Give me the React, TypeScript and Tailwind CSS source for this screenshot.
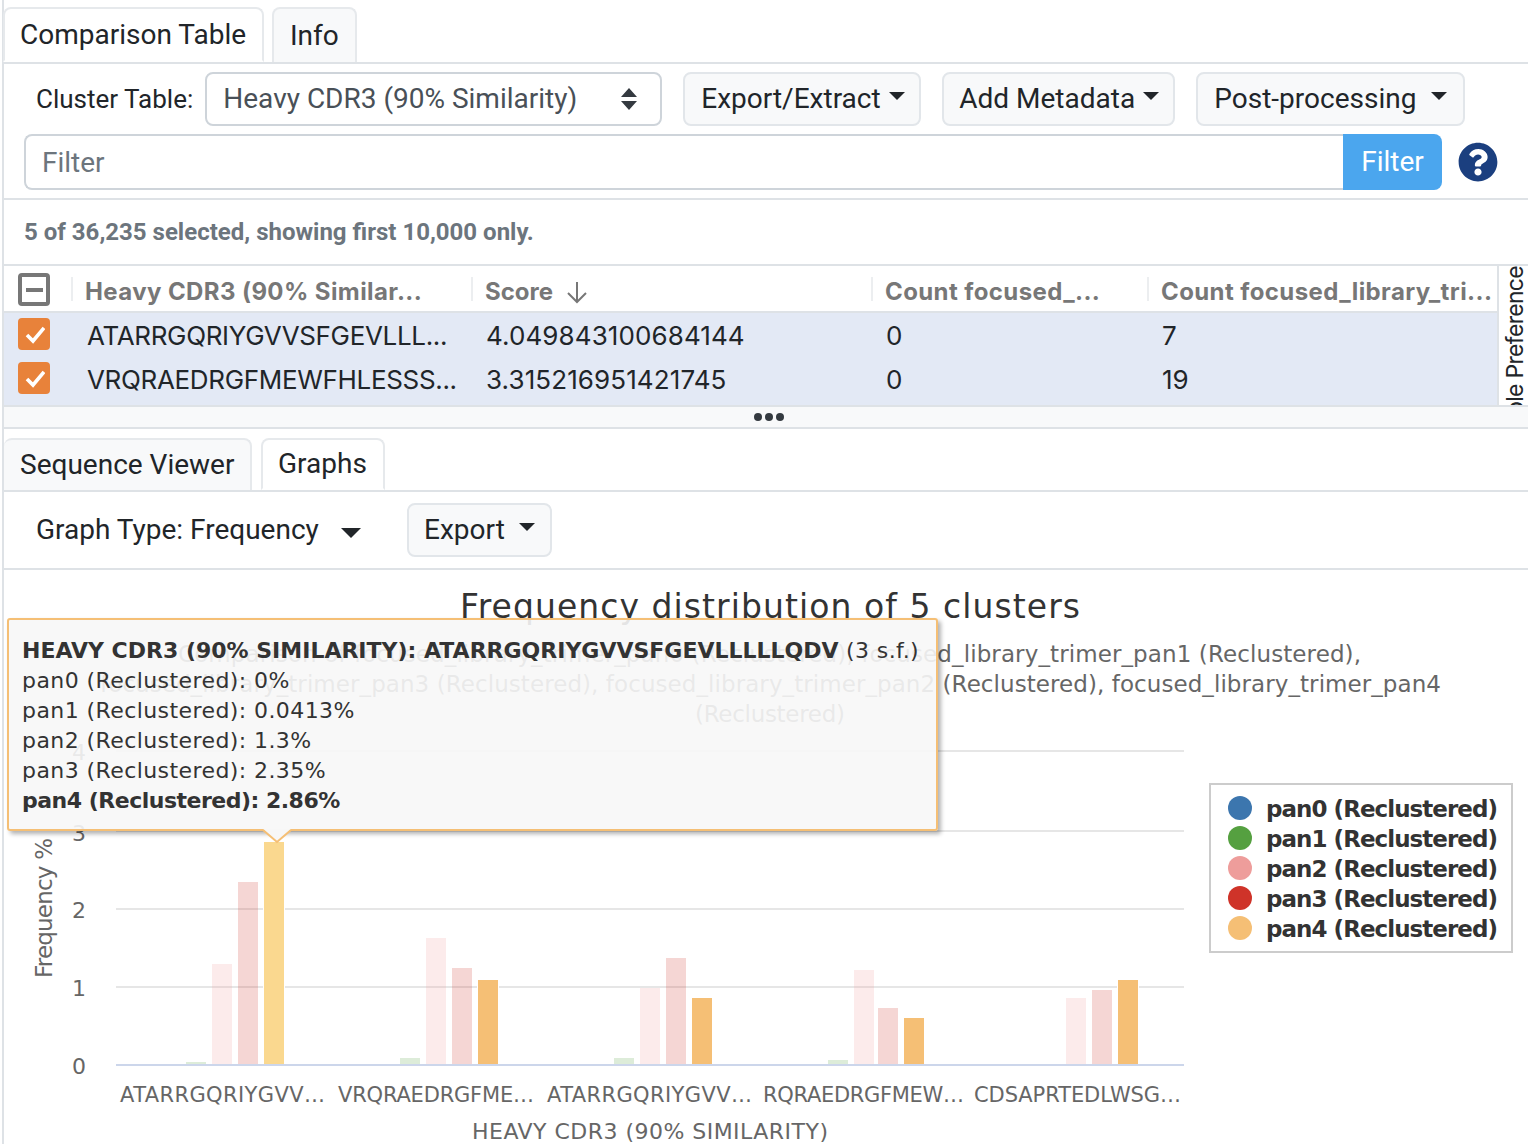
import React from "react";
import { FaQuestionCircle } from "react-icons/fa";

const CHART_FONT = "'DejaVu Sans', 'Liberation Sans', sans-serif";
const TABLE_FONT = "Inter, 'Liberation Sans', sans-serif";

const Caret = () => (
  <span className="inline-block w-0 h-0 border-x-[8px] border-x-transparent border-t-[8px] border-t-[#212529]" />
);

const tabBase = "h-full flex items-center border-2 rounded-t-lg text-[28px] leading-none";

function Btn({ w, pl, children }: { w: string; pl: string; children: React.ReactNode }) {
  return <div className={`${w} ${pl} h-[54px] flex items-center bg-[#f8f9fa] border-2 border-[#e2e6ea] rounded-lg text-[28px] text-[#212529]`}>{children}</div>;
}

type B = [number, number, string, number];
const bars: B[] = [
  [186, 1062, "#55a040", 0.2], [212, 964, "#ee9d9b", 0.2], [238, 882, "#cf3329", 0.2],
  [400, 1058, "#55a040", 0.2], [426, 938, "#ee9d9b", 0.2], [452, 968, "#cf3329", 0.2],
  [614, 1058, "#55a040", 0.2], [640, 988, "#ee9d9b", 0.2], [666, 958, "#cf3329", 0.2],
  [828, 1060, "#55a040", 0.2], [854, 970, "#ee9d9b", 0.2], [878, 1008, "#cf3329", 0.2],
  [1066, 998, "#ee9d9b", 0.2], [1092, 990, "#cf3329", 0.2],
];
const solid: [number, number, string][] = [
  [264, 842, "#fad88f"], [478, 980, "#f5bf75"], [692, 998, "#f5bf75"], [904, 1018, "#f5bf75"], [1118, 980, "#f5bf75"],
];
const legend: [string, string, number][] = [
  ["pan0 (Reclustered)", "#3c76ae", 808],
  ["pan1 (Reclustered)", "#55a040", 838],
  ["pan2 (Reclustered)", "#ee9d9b", 868],
  ["pan3 (Reclustered)", "#cf3329", 898],
  ["pan4 (Reclustered)", "#f5bf75", 928],
];
const xLabels: [string, number, number][] = [
  ["ATARRGQRIYGVV…", 120, 205],
  ["VRQRAEDRGFME…", 338, 196],
  ["ATARRGQRIYGVV…", 547, 205],
  ["RQRAEDRGFMEW…", 763, 201],
  ["CDSAPRTEDLWSG…", 974, 207],
];

function Chart() {
  return (
    <svg viewBox="4 570 1524 574" width={1524} height={574} className="block" style={{ fontFamily: CHART_FONT }}>
      <text x={460} y={618} fontSize={33} fill="#333" textLength={620}>Frequency distribution of 5 clusters</text>
      <g fontSize={23} fill="#666">
        <text x={178} y={662} textLength={1183}>Comparison of focused_library_trimer_pan0 (Reclustered), focused_library_trimer_pan1 (Reclustered),</text>
        <text x={100} y={692} textLength={1341}>focused_library_trimer_pan3 (Reclustered), focused_library_trimer_pan2 (Reclustered), focused_library_trimer_pan4</text>
        <text x={695} y={722} textLength={150}>(Reclustered)</text>
      </g>
      {[751, 831, 909, 987].map((y) => (
        <rect key={y} x={116} y={y - 1} width={1068} height={2} fill="#e6e6e6" />
      ))}
      {bars.map(([x, y, c, o], i) => (
        <rect key={i} x={x} y={y} width={20} height={1064 - y} fill={c} fillOpacity={o} />
      ))}
      {solid.map(([x, y, c], i) => (
        <rect key={i} x={x} y={y} width={20} height={1064 - y} fill={c} stroke="#fff" strokeWidth={2} paintOrder="stroke" />
      ))}
      <rect x={116} y={1064} width={1068} height={2} fill="#ccd6eb" />
      <g fontSize={22} fill="#666" textAnchor="end">
        <text x={86} y={1074}>0</text>
        <text x={86} y={996}>1</text>
        <text x={86} y={918}>2</text>
        <text x={86} y={841}>3</text>
        <text x={86} y={760}>4</text>
      </g>
      <text transform="translate(52 978) rotate(-90)" fontSize={23} fill="#666" textLength={140}>Frequency %</text>
      <g fontSize={21} fill="#666">
        {xLabels.map(([t, x, w], i) => (
          <text key={i} x={x} y={1102} textLength={w}>{t}</text>
        ))}
        <text x={472} y={1139} fontSize={22} textLength={356}>HEAVY CDR3 (90% SIMILARITY)</text>
      </g>
      <rect x={1210} y={784} width={302} height={168} fill="#fff" stroke="#ccc" strokeWidth={2} />
      {legend.map(([t, c, y]) => (
        <g key={t}>
          <circle cx={1240} cy={y} r={12} fill={c} />
          <text x={1266} y={y + 9} fontSize={23} fontWeight={700} fill="#333" textLength={232}>{t}</text>
        </g>
      ))}
    </svg>
  );
}

function Tooltip() {
  return (
    <div
      className="absolute left-[3px] top-[48px] w-[931px] h-[213px] bg-[#f7f7f7]/90 border-2 border-[#f5bf75] rounded-[3px] shadow-[3px_3px_4px_rgba(0,0,0,0.3)] pl-[13px] pt-[16px] text-[22px] leading-[30px] text-[#333] whitespace-nowrap tracking-[0.42px]"
      style={{ fontFamily: CHART_FONT }}
    >
      <div><b className="tracking-normal">HEAVY CDR3 (90% SIMILARITY): ATARRGQRIYGVVSFGEVLLLLLQDV</b> (3 s.f.)</div>
      <div>pan0 (Reclustered): 0%</div>
      <div>pan1 (Reclustered): 0.0413%</div>
      <div>pan2 (Reclustered): 1.3%</div>
      <div>pan3 (Reclustered): 2.35%</div>
      <div><b className="tracking-[-0.5px]">pan4 (Reclustered): 2.86%</b></div>
      <svg className="absolute left-[253px] top-[209px]" width={30} height={16} viewBox="0 0 30 16">
        <path d="M1 0 L15 13 L29 0 Z" fill="#f7f7f7" />
        <path d="M1 1 L15 13 L29 1" fill="none" stroke="#f5bf75" strokeWidth={2} />
      </svg>
    </div>
  );
}

const Check = () => (
  <span className="w-[32px] h-[32px] -mt-[2px] rounded-[4px] bg-[#e8823a] flex items-center justify-center">
    <svg width={22} height={22} viewBox="0 0 22 22"><path d="M4 12 L10 18 L21 5" fill="none" stroke="#fff" strokeWidth={3.6} /></svg>
  </span>
);

function HeadCell({ w, children }: { w: string; children: React.ReactNode }) {
  return (
    <div className={`${w} h-[24px] border-l-2 border-[#eceef0] pl-[12px] pt-[6px] flex items-center gap-[12px] text-[24px] font-bold text-[#777777] whitespace-nowrap tracking-[0.4px]`}>{children}</div>
  );
}

function Row({ a, b, c, d }: { a: string; b: string; c: string; d: string }) {
  return (
    <div className="h-[44px] flex items-center pl-[14px] text-[26px] text-[#212529] whitespace-nowrap">
      <div className="w-[69px]"><Check /></div>
      <div className="w-[399px] tracking-[-0.33px]">{a}</div>
      <div className="w-[400px] tracking-[0.1px]">{b}</div>
      <div className="w-[276px]">{c}</div>
      <div>{d}</div>
    </div>
  );
}

export default function App() {
  return (
    <div className="w-[1528px] h-[1144px] overflow-hidden bg-white pl-[2px]" style={{ fontFamily: "Roboto, 'Liberation Sans', sans-serif" }}>
      <div className="border-l-2 border-[#dee2e6] h-full">
        {/* top tabs */}
        <div className="h-[64px] pt-[7px] flex gap-[8px] border-b-2 border-[#dee2e6] text-[#212529]">
          <div className={`${tabBase} w-[261px] -ml-[1px] pl-[15px] bg-white border-[#e6e9ec] border-b-white h-[57px]`}>Comparison Table</div>
          <div className={`${tabBase} w-[85px] pl-[16px] bg-[#f8f9fa] border-[#e6e9ec] border-b-0`}>Info</div>
        </div>
        {/* toolbar */}
        <div className="h-[70px] pt-[8px] flex gap-[21px]">
          <div className="flex items-center h-[54px] pl-[32px] gap-[12px]">
            <span className="text-[26px] text-[#212529] whitespace-nowrap">Cluster Table:</span>
            <div className="w-[457px] h-[54px] relative flex items-center border-2 border-[#ced4da] rounded-lg pl-[16px] text-[28px] text-[#495057] whitespace-nowrap">
              Heavy CDR3 (90% Similarity)
              <svg className="absolute right-[23px] top-[13px]" width={16} height={24} viewBox="0 0 16 24"><path d="M8 1 L16 10 H0 Z M0 14 H16 L8 23 Z" fill="#343a40" /></svg>
            </div>
          </div>
          <Btn w="w-[238px]" pl="pl-[16px]"><span className="whitespace-nowrap">Export/Extract</span><span className="ml-[8px] -mt-[6px] flex"><Caret /></span></Btn>
          <Btn w="w-[233px]" pl="pl-[15px]"><span className="whitespace-nowrap">Add Metadata</span><span className="ml-[8px] -mt-[6px] flex"><Caret /></span></Btn>
          <Btn w="w-[269px]" pl="pl-[16px]"><span className="whitespace-nowrap">Post-processing</span><span className="ml-[15px] -mt-[6px] flex"><Caret /></span></Btn>
        </div>
        {/* filter */}
        <div className="h-[66px] pl-[20px] flex border-b-2 border-[#dee2e6]">
          <div className="w-[1319px] h-[56px] flex items-center border-2 border-r-0 border-[#ced4da] rounded-l-lg pl-[16px] pt-[2px] text-[28px] text-[#6c757d]">Filter</div>
          <div className="w-[99px] h-[56px] flex items-center justify-center bg-[#4ba6ee] rounded-r-lg text-[28px] text-white">Filter</div>
          <FaQuestionCircle className="ml-[16px] mt-[8px] text-[#1b3f7f]" size={40} />
        </div>
        {/* status */}
        <div className="h-[64px] flex items-center pl-[20px] text-[24px] font-bold text-[#6c757d] whitespace-nowrap">5 of 36,235 selected, showing first 10,000 only.</div>
        {/* table */}
        <div className="h-[143px] flex border-t-2 border-b-2 border-[#dee2e6]" style={{ fontFamily: TABLE_FONT }}>
          <div className="w-[1493px] shrink-0">
            <div className="h-[47px] flex items-center pl-[14px] border-b-2 border-[#dee2e6]">
              <div className="w-[53px]">
                <span className="w-[32px] h-[33px] mt-[2px] rounded-[4px] border-[4px] border-[#777777] flex items-center justify-center"><span className="w-[17px] h-[4px] bg-[#777777]" /></span>
              </div>
              <HeadCell w="w-[400px]">Heavy CDR3 (90% Similar...</HeadCell>
              <HeadCell w="w-[400px]"><span className="tracking-normal">Score</span>
                <svg width={24} height={24} viewBox="0 0 24 24"><path d="M12 2 V22 M3 13 L12 22 L21 13" fill="none" stroke="#777777" strokeWidth={2} /></svg>
              </HeadCell>
              <HeadCell w="w-[276px]">Count focused_...</HeadCell>
              <HeadCell w="w-[340px]">Count focused_library_tri...</HeadCell>
            </div>
            <div className="h-[92px] bg-[#e3e9f5]">
              <Row a="ATARRGQRIYGVVSFGEVLLL..." b="4.049843100684144" c="0" d="7" />
              <Row a="VRQRAEDRGFMEWFHLESSS..." b="3.315216951421745" c="0" d="19" />
            </div>
          </div>
          <div className="w-[31px] border-l-2 border-[#dee2e6] overflow-hidden flex flex-col items-center pl-[3px]">
            <span className="shrink-0 [writing-mode:vertical-rl] rotate-180 text-[23px] tracking-[-0.7px] leading-[28px] whitespace-nowrap text-[#212529]">Table Preference</span>
          </div>
        </div>
        {/* handle */}
        <div className="h-[22px] bg-[#f8f9fa] border-b-2 border-[#dee2e6] flex items-center justify-center gap-[3px] pl-[6px]">
          <span className="w-[8px] h-[8px] rounded-full bg-[#343a40]" />
          <span className="w-[8px] h-[8px] rounded-full bg-[#343a40]" />
          <span className="w-[8px] h-[8px] rounded-full bg-[#343a40]" />
        </div>
        {/* lower tabs */}
        <div className="h-[63px] pt-[9px] flex gap-[9px] border-b-2 border-[#dee2e6] text-[#212529]">
          <div className={`${tabBase} w-[248px] pl-[16px] bg-[#f8f9fa] border-[#e6e9ec] border-l-0 border-b-0`}>Sequence Viewer</div>
          <div className={`${tabBase} w-[124px] pl-[15px] bg-white border-[#e6e9ec] border-b-white h-[54px]`}>Graphs</div>
        </div>
        {/* graph toolbar */}
        <div className="h-[78px] pt-[11px] flex border-b-2 border-[#dee2e6]">
          <div className="w-[403px] pl-[32px] h-[54px] flex items-center text-[28px] text-[#212529] whitespace-nowrap">
            Graph Type: Frequency
            <span className="ml-[22px] mt-[6px] flex border-x-[10px] border-x-transparent border-t-[10px] border-t-[#212529] w-0 h-0" />
          </div>
          <Btn w="w-[145px]" pl="pl-[15px]">Export<span className="ml-[14px] -mt-[6px] flex"><Caret /></span></Btn>
        </div>
        {/* chart */}
        <div className="relative">
          <Chart />
          <Tooltip />
        </div>
      </div>
    </div>
  );
}
